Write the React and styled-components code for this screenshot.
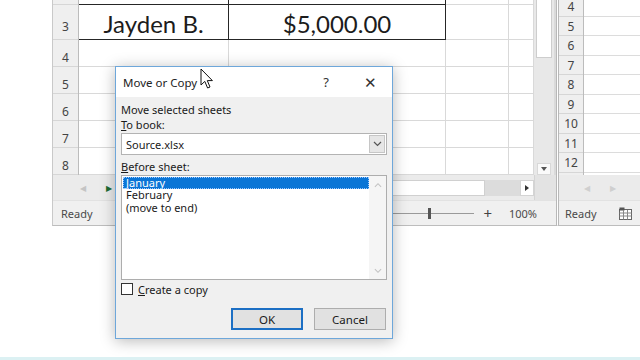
import React from 'react'
import styled, { createGlobalStyle } from 'styled-components'

const ui = `"Segoe UI", "Noto Sans", "Open Sans", sans-serif`

const GlobalStyle = createGlobalStyle`
  html, body {
    margin: 0;
    padding: 0;
    background: #ffffff;
    overflow: hidden;
  }
  * { box-sizing: border-box; }
`

const Screen = styled.div`
  position: relative;
  width: 640px;
  height: 360px;
  overflow: hidden;
  display: flex;
  flex-direction: column;
  background: #fff;
  font-family: ${ui};
`

const Windows = styled.div`
  display: flex;
  height: 226px;
  padding-left: 52px;
`

const Filler = styled.div`
  flex: 1;
`

const TaskbarEdge = styled.div`
  height: 3px;
  background: #dcf1f3;
`

/* ---------- left excel window ---------- */

const LeftWindow = styled.div`
  width: 504px;
  display: flex;
  flex-direction: column;
  border-left: 1px solid #c9c9c9;
  border-bottom: 1px solid #bdbdbd;
`

const SheetArea = styled.div`
  height: 175px;
  display: flex;
  overflow: hidden;
`

const RowHeaders = styled.div`
  width: ${p => p.$w}px;
  flex-shrink: 0;
  display: flex;
  flex-direction: column;
  background: #efefef;
  border-right: 1px solid #bcbcbc;
  overflow: hidden;
`

const RowNum = styled.div`
  height: ${p => p.$h}px;
  flex-shrink: 0;
  display: flex;
  align-items: center;
  justify-content: center;
  padding-top: ${p => p.$pt || 0}px;
  font-size: 12px;
  color: #444;
  border-bottom: 1px solid #d6d6d6;
`

const Grid = styled.div`
  display: grid;
  grid-template-columns: 150px 217px 63px 25px;
  grid-template-rows: 5px 35px repeat(5, 27px);
  width: 455px;
`

const Cell = styled.div`
  border-right: 1px solid ${p => (p.$boxed ? '#262626' : '#d9d9d9')};
  border-bottom: 1px solid ${p => (p.$boxed ? '#262626' : '#d9d9d9')};
  display: flex;
  align-items: center;
  justify-content: center;
  font-family: Lato, "Liberation Sans", sans-serif;
  font-size: 24px;
  color: #1c1c1c;
  padding-top: 2px;
`

const VScroll = styled.div`
  width: 22px;
  display: flex;
  flex-direction: column;
  align-items: center;
  background: #e8e8e8;
  border-right: 2px solid #dadada;
`

const Thumb = styled.div`
  width: 16px;
  height: 58px;
  background: #ffffff;
  border: 1px solid #cdcdcd;
  border-top: none;
`

const ArrowBtn = styled.div`
  margin-top: auto;
  width: 14px;
  height: 12px;
  display: flex;
  align-items: center;
  justify-content: center;
  background: #fafafa;
  border: 1px solid #d8d8d8;
`

const HBar = styled.div`
  height: 25px;
  display: flex;
  align-items: center;
  padding-left: ${p => p.$pl || 0}px;
  background: #ebebeb;
`

const NavArrow = styled.span`
  width: 26px;
  text-align: center;
  font-size: 8px;
  color: ${p => p.$c};
`

const HTrack = styled.div`
  margin-left: auto;
  display: flex;
  align-items: center;
  height: 16px;
`

const HThumb = styled.div`
  width: 180px;
  height: 16px;
  background: #fff;
  border: 1px solid #d0d0d0;
`

const HGap = styled.div`
  width: 35px;
  height: 16px;
  background: #dcdcdc;
`

const HButton = styled.div`
  width: 14px;
  height: 16px;
  background: #fff;
  border: 1px solid #d4d4d4;
  display: flex;
  align-items: center;
  justify-content: center;
`

const Corner = styled.div`
  width: 22px;
  height: 25px;
  background: #e3e3e3;
  border-left: 1px solid #d4d4d4;
`

const StatusBar = styled.div`
  height: 25px;
  display: flex;
  align-items: center;
  padding: 0 19px 0 8px;
  background: #f0f0f0;
  border-top: 1px solid #e2e2e2;
  font-size: 11px;
  color: #4a4a4a;
`

const Slider = styled.div`
  margin-left: auto;
  display: flex;
  align-items: center;
  gap: 9px;
`

const SliderLine = styled.div`
  position: relative;
  width: 92px;
  height: 1px;
  background: #9a9a9a;
`

const SliderKnob = styled.div`
  position: absolute;
  left: 46px;
  top: -5px;
  width: 3px;
  height: 11px;
  background: #555;
`

const Plus = styled.span`
  font-size: 15px;
  color: #444;
  margin-right: 8px;
`

/* ---------- right excel window ---------- */

const RightWindow = styled.div`
  flex: 1;
  display: flex;
  flex-direction: column;
  border-left: 3px double #b8b8b8;
  border-bottom: 1px solid #bdbdbd;
`

const RightSheet = styled.div`
  height: 175px;
  display: flex;
  overflow: hidden;
`

const RightRows = styled.div`
  display: flex;
  flex-direction: column;
  margin-top: -3px;
`

const RightCells = styled.div`
  flex: 1;
  display: flex;
  flex-direction: column;
  margin-top: -3px;
`

const BlankRow = styled.div`
  height: 19.5px;
  flex-shrink: 0;
  border-bottom: 1px solid #dcdcdc;
`

const RightStatus = styled(StatusBar)`
  padding: 0 8px 0 6px;
  justify-content: space-between;
`

/* ---------- dialog ---------- */

const Dialog = styled.div`
  position: absolute;
  left: 115px;
  top: 66px;
  width: 278px;
  height: 273px;
  display: flex;
  flex-direction: column;
  border: 1px solid #6ea7da;
  background: #f0f0f0;
  box-shadow: 0 2px 14px rgba(0, 0, 0, 0.28);
  font-family: ${ui};
  font-size: 11px;
  color: #1a1a1a;
`

const TitleBar = styled.div`
  height: 30px;
  display: flex;
  align-items: center;
  padding-left: 7px;
  background: #ffffff;
  font-size: 11.5px;
  color: #222;
`

const TitleBtn = styled.span`
  width: 44px;
  text-align: center;
  font-size: ${p => (p.$first ? 13 : 15)}px;
  font-weight: ${p => (p.$first ? 400 : 300)};
  color: #333;
  margin-left: ${p => (p.$first ? 'auto' : '0')};
`

const Body = styled.div`
  flex: 1;
  display: flex;
  flex-direction: column;
  padding: 6px 5px 8px 5px;
`

const Label = styled.div`
  height: 14px;
  line-height: 14px;
  margin-bottom: ${p => p.$mb || 0}px;
  margin-top: ${p => p.$mt || 0}px;
`

const Key = styled.span`
  text-decoration: underline;
`

const Select = styled.div`
  height: 22px;
  display: flex;
  align-items: center;
  padding: 0 1px 0 4px;
  background: #fff;
  border: 1px solid #b3b3b3;
`

const SelectBtn = styled.div`
  margin-left: auto;
  width: 16px;
  height: 18px;
  display: flex;
  align-items: center;
  justify-content: center;
  background: #e6e6e6;
  border: 1px solid #c6c6c6;
`

const ListBox = styled.div`
  height: 105px;
  display: flex;
  background: #fff;
  border: 1px solid #adadad;
  margin-top: 1px;
`

const Items = styled.div`
  flex: 1;
  padding: 1px 0 0 1px;
`

const Item = styled.div`
  height: 12.4px;
  line-height: 12.4px;
  padding-left: 3px;
  background: ${p => (p.$sel ? '#0a75d6' : 'transparent')};
  color: ${p => (p.$sel ? '#fff' : '#1a1a1a')};
  outline: ${p => (p.$sel ? '1px dotted #9cc8ff' : 'none')};
  outline-offset: -1px;
`

const ListScroll = styled.div`
  width: 17px;
  display: flex;
  flex-direction: column;
  align-items: center;
  justify-content: space-between;
  padding: 6px 0 5px;
  background: #f5f5f5;
`

const CheckRow = styled.label`
  display: flex;
  align-items: center;
  gap: 5px;
  margin-top: 3px;
  height: 12px;
`

const Box = styled.span`
  width: 12px;
  height: 12px;
  background: #fff;
  border: 1px solid #333;
`

const Buttons = styled.div`
  display: flex;
  justify-content: flex-end;
  gap: 11px;
  margin-top: auto;
  padding-right: 1px;
`

const Button = styled.div`
  width: 72px;
  height: 22px;
  display: flex;
  align-items: center;
  justify-content: center;
  background: #e1e1e1;
  border: ${p => (p.$default ? '2px solid #1c6fc4' : '1px solid #adadad')};
  font-size: 11.5px;
  color: #1a1a1a;
`

const Cursor = styled.svg`
  position: absolute;
  left: 200px;
  top: 68px;
`

const Chevron = ({ up, color = '#555', w = 9 }) => (
  <svg width={w} height="6" viewBox="0 0 9 6">
    <polyline
      points={up ? '1,5 4.5,1.5 8,5' : '1,1 4.5,4.5 8,1'}
      fill="none"
      stroke={color}
      strokeWidth="1.2"
    />
  </svg>
)

const Tri = ({ dir = 'right', color = '#333', s = 6 }) => (
  <svg width={s} height={s} viewBox="0 0 6 6">
    <polygon points={dir === 'right' ? '1,0 5,3 1,6' : dir === 'down' ? '0,1 6,1 3,5' : '5,0 1,3 5,6'} fill={color} />
  </svg>
)

const ViewIcon = () => (
  <svg width="13" height="13" viewBox="0 0 13 13">
    <rect x="0.5" y="2.5" width="12" height="10" fill="#fff" stroke="#666" />
    <rect x="0.5" y="0.5" width="5" height="3" fill="#555" />
    <line x1="0.5" y1="6" x2="12.5" y2="6" stroke="#888" />
    <line x1="0.5" y1="9" x2="12.5" y2="9" stroke="#888" />
    <line x1="4.5" y1="3" x2="4.5" y2="12.5" stroke="#888" />
    <line x1="8.5" y1="3" x2="8.5" y2="12.5" stroke="#888" />
  </svg>
)

const leftRows = [
  { n: '', h: 5 },
  { n: '3', h: 35, pt: 8 },
  { n: '4', h: 27, pt: 8 },
  { n: '5', h: 27, pt: 8 },
  { n: '6', h: 27, pt: 8 },
  { n: '7', h: 27, pt: 8 },
  { n: '8', h: 27, pt: 8 },
]

const gridData = [
  ['', '', '', ''],
  ['Jayden B.', '$5,000.00', '', ''],
  ['', '', '', ''],
  ['', '', '', ''],
  ['', '', '', ''],
  ['', '', '', ''],
  ['', '', '', ''],
]

const rightRows = ['4', '5', '6', '7', '8', '9', '10', '11', '12', '13']

const App = () => {
  return (
    <Screen>
      <GlobalStyle />
      <Windows>
        <LeftWindow>
          <SheetArea>
            <RowHeaders $w={26}>
              {leftRows.map((r, i) => (
                <RowNum key={i} $h={r.h} $pt={r.pt}>{r.n}</RowNum>
              ))}
            </RowHeaders>
            <Grid>
              {gridData.map((row, ri) =>
                row.map((val, ci) => (
                  <Cell key={`${ri}-${ci}`} $boxed={ri < 2 && ci < 2}>{val}</Cell>
                ))
              )}
            </Grid>
            <VScroll>
              <Thumb />
              <ArrowBtn><Tri dir="down" color="#555" /></ArrowBtn>
            </VScroll>
          </SheetArea>
          <HBar $pl={17}>
            <NavArrow $c="#c4c4c4">◀</NavArrow>
            <NavArrow $c="#1e6b35">▶</NavArrow>
            <HTrack>
              <HThumb />
              <HGap />
              <HButton><Tri color="#333" /></HButton>
            </HTrack>
            <Corner />
          </HBar>
          <StatusBar>
            Ready
            <Slider>
              <SliderLine><SliderKnob /></SliderLine>
              <Plus>+</Plus>
              <span>100%</span>
            </Slider>
          </StatusBar>
        </LeftWindow>

        <RightWindow>
          <RightSheet>
            <RowHeaders $w={25}>
              <RightRows>
                {rightRows.map(n => (
                  <RowNum key={n} $h={19.5} $pt={1}>{n}</RowNum>
                ))}
              </RightRows>
            </RowHeaders>
            <RightCells>
              {rightRows.map(n => <BlankRow key={n} />)}
            </RightCells>
          </RightSheet>
          <HBar $pl={15}>
            <NavArrow $c="#cfcfcf">◀</NavArrow>
            <NavArrow $c="#cfcfcf">▶</NavArrow>
          </HBar>
          <RightStatus>
            Ready
            <ViewIcon />
          </RightStatus>
        </RightWindow>
      </Windows>
      <Filler />
      <TaskbarEdge />

      <Dialog>
        <TitleBar>
          Move or Copy
          <TitleBtn $first>?</TitleBtn>
          <TitleBtn>✕</TitleBtn>
        </TitleBar>
        <Body>
          <Label $mb={1}>Move selected sheets</Label>
          <Label $mb={1}><Key>T</Key>o book:</Label>
          <Select>
            Source.xlsx
            <SelectBtn><Chevron /></SelectBtn>
          </Select>
          <Label $mt={5}><Key>B</Key>efore sheet:</Label>
          <ListBox>
            <Items>
              <Item $sel>January</Item>
              <Item>February</Item>
              <Item>(move to end)</Item>
            </Items>
            <ListScroll>
              <Chevron up color="#c2c2c2" w={8} />
              <Chevron color="#c2c2c2" w={8} />
            </ListScroll>
          </ListBox>
          <CheckRow>
            <Box />
            <span><Key>C</Key>reate a copy</span>
          </CheckRow>
          <Buttons>
            <Button $default>OK</Button>
            <Button>Cancel</Button>
          </Buttons>
        </Body>
      </Dialog>

      <Cursor width="14" height="22" viewBox="0 0 14 22">
        <path d="M1 1 L1 17 L4.8 13.4 L7.6 20 L10 19 L7.3 12.6 L12.4 12.6 Z" fill="#fff" stroke="#111" strokeWidth="1" strokeLinejoin="round" />
      </Cursor>
    </Screen>
  )
}

export default App
